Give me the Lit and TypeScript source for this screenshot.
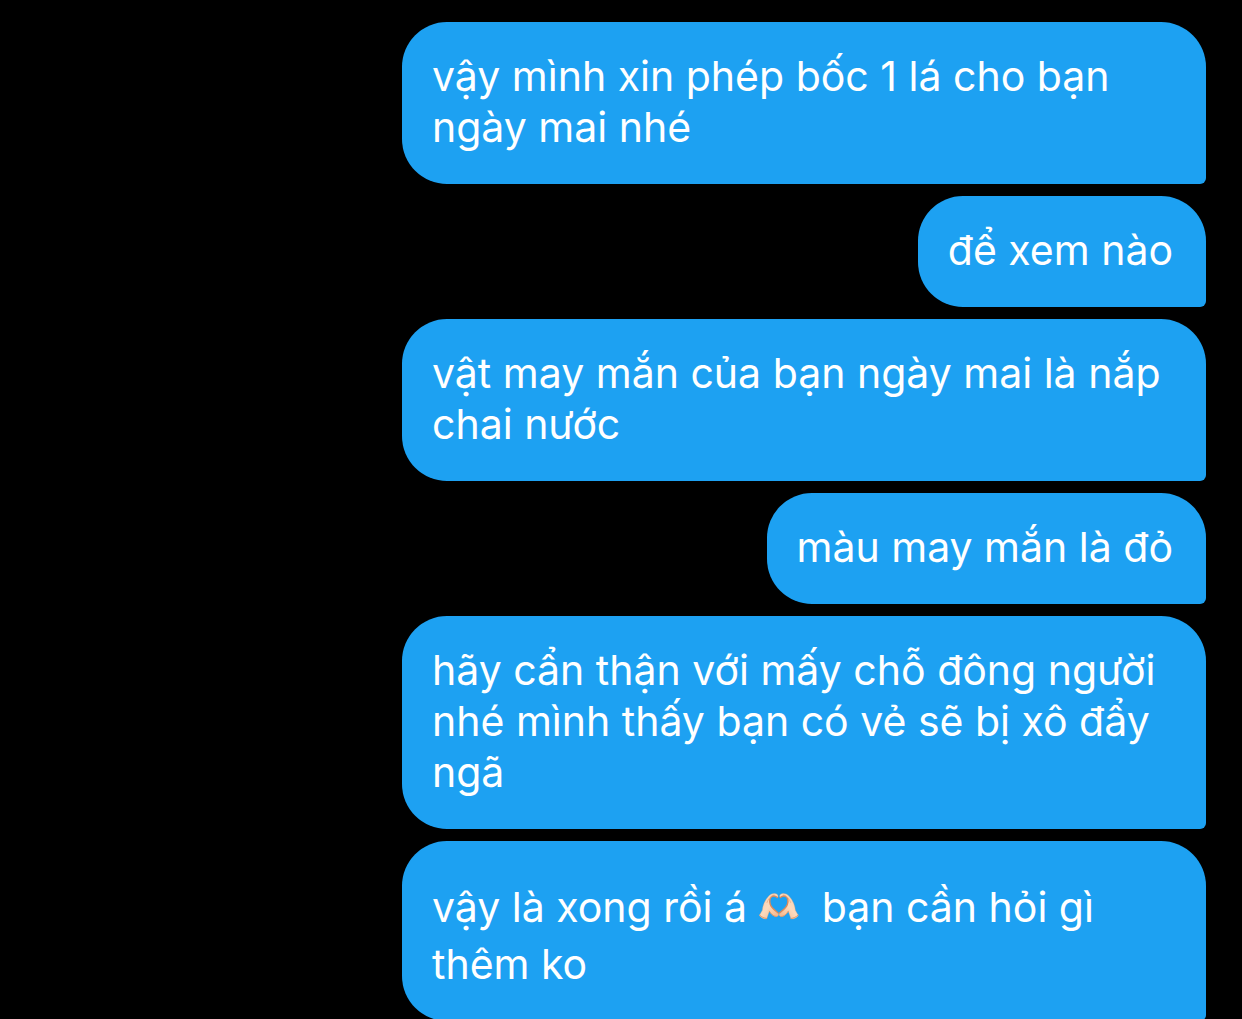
import { LitElement, html, svg, css } from "lit";
import { customElement } from "lit/decorators.js";

const hand = svg`
  <path d="M1 67 L10 51 C11 38 17 22 30 8 C37 1 47 -1 54 3 C58 6 58 11 55 13 C50 9 44 7 39 10 C32 14 31 24 34 34 C37 44 47 51 57 59 C60 63 59 69 53 70 C45 70 38 65 31 54 L23 77 C14 78 6 74 1 67 Z" fill="url(#skin)" stroke="#f0a878" stroke-width="1" stroke-linejoin="round"/>
  <path d="M55 13 C50 9 44 7 39 10 C32 14 31 24 34 34 C37 44 47 51 57 59" fill="none" stroke="#d98a5c" stroke-width="4" stroke-linecap="round"/>
  <path d="M24 28 C28 17 35 8 45 5" fill="none" stroke="#e8a578" stroke-width="2" stroke-linecap="round"/>
  <path d="M31 54 C38 65 45 70 53 70 M2 66 C8 72 15 75 23 76" fill="none" stroke="#e89a66" stroke-width="3" stroke-linecap="round"/>
`;

@customElement("app-root")
export class AppRoot extends LitElement {
  static styles = css`
    :host {
      display: block;
      background: #000;
    }
    .thread {
      list-style: none;
      margin: 0;
      padding: 22px 36px 0 402px;
      display: flex;
      flex-direction: column;
      align-items: flex-end;
      gap: 12px;
      height: 100vh;
      box-sizing: border-box;
      overflow: hidden;
    }
    .bubble {
      flex: none;
      background: #1da1f2;
      color: #fff;
      border-radius: 45px 45px 6px 45px;
      padding: 29px 33px 31px 30px;
      font: 400 41px/51px Inter, "Liberation Sans", sans-serif;
    }
    .bubble p {
      margin: 0;
    }
    .with-emoji {
      padding-top: 38px;
      padding-bottom: 28px;
      line-height: 57px;
    }
    .hands {
      width: 40px;
      height: 27px;
      vertical-align: 2px;
    }
  `;

  render() {
    return html`<ul class="thread">
      <li class="bubble"><p>vậy mình xin phép bốc 1 lá cho bạn ngày mai nhé</p></li>
      <li class="bubble"><p>để xem nào</p></li>
      <li class="bubble"><p>vật may mắn của bạn ngày mai là nắp chai nước</p></li>
      <li class="bubble"><p>màu may mắn là đỏ</p></li>
      <li class="bubble">
        <p>hãy cẩn thận với mấy chỗ đông người nhé mình thấy bạn có vẻ sẽ bị xô đẩy ngã</p>
      </li>
      <li class="bubble with-emoji">
        <p>vậy là xong rồi á <svg class="hands" viewBox="0 0 120 80" aria-hidden="true">
            <defs>
              <linearGradient id="skin" x1="0" y1="0" x2="1" y2="1">
                <stop offset="0" stop-color="#f9cfae" />
                <stop offset="0.5" stop-color="#fcdabd" />
                <stop offset="1" stop-color="#f3b083" />
              </linearGradient>
            </defs>
            <g>${hand}</g>
            <g transform="translate(119 0) scale(-1 1)">${hand}</g>
          </svg>&nbsp; bạn cần hỏi gì thêm ko</p>
      </li>
    </ul>`;
  }
}
